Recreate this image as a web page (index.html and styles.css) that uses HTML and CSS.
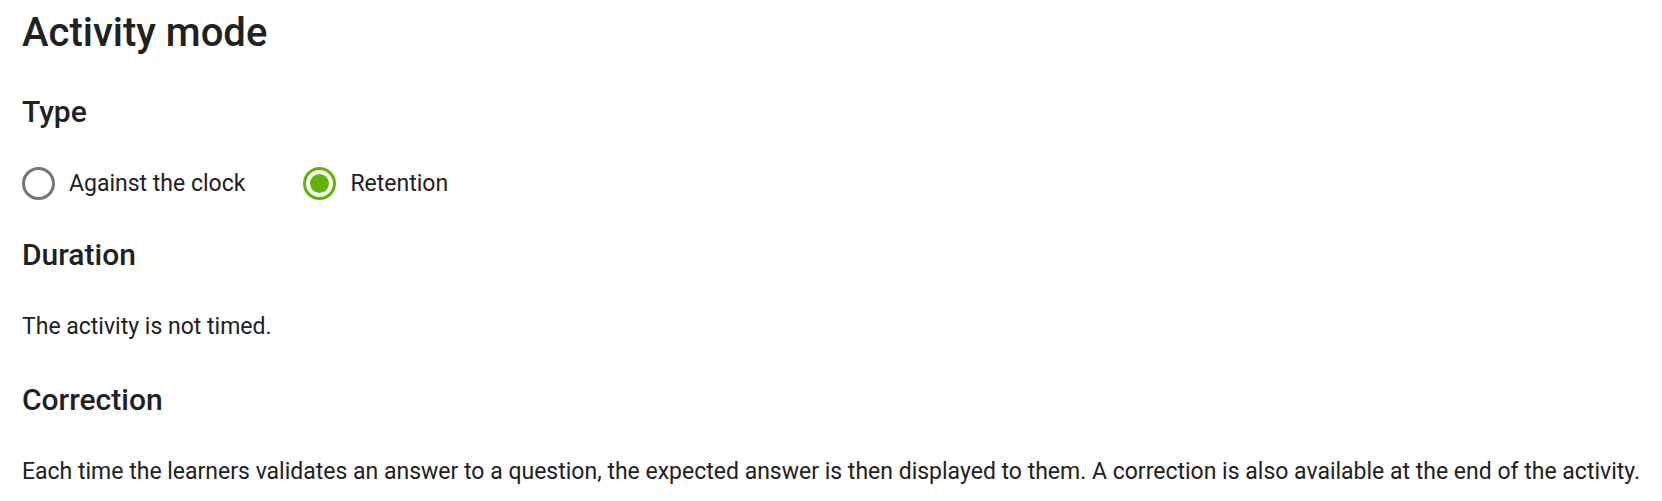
FILE: index.html
```html
<!DOCTYPE html>
<html lang="en">
<head>
<meta charset="utf-8">
<link rel="stylesheet" href="styles.css">
<title>Activity mode</title>
</head>
<body>
<main class="page">
  <h1 class="title">Activity mode</h1>
  <section class="section">
    <h2 class="heading">Type</h2>
    <div class="radios">
      <label class="radio"><span class="radio-circle"></span><span class="radio-label">Against the clock</span></label>
      <label class="radio"><span class="radio-circle checked"></span><span class="radio-label">Retention</span></label>
    </div>
  </section>
  <section class="section">
    <h2 class="heading">Duration</h2>
    <p class="text">The activity is not timed.</p>
  </section>
  <section class="section section--after-text">
    <h2 class="heading">Correction</h2>
    <p class="text">Each time the learners validates an answer to a question, the expected answer is then displayed to them. A correction is also available at the end of the activity.</p>
  </section>
</main>
</body>
</html>
```
FILE: styles.css
```css
html, body {
  margin: 0;
  padding: 0;
  background: #ffffff;
}
body {
  font-family: Roboto, "Liberation Sans", sans-serif;
  color: #212121;
}
.page {
  padding: 9px 22px 0 22px;
}
.title {
  margin: 0;
  font-size: 40px;
  font-weight: 500;
  line-height: 48px;
}
.section {
  margin-top: 37px;
}
.section--after-text {
  margin-top: 39px;
}
.heading {
  margin: 0;
  font-size: 30px;
  font-weight: 500;
  line-height: 36px;
}
.text {
  margin: 38px 0 0 0;
  font-size: 23px;
  line-height: 32px;
  white-space: nowrap;
}
.radios {
  display: flex;
  gap: 58px;
  margin-top: 37px;
}
.radio {
  display: flex;
  align-items: center;
  gap: 14px;
  font-size: 23px;
  line-height: 32px;
}
.radio-circle {
  box-sizing: border-box;
  width: 33px;
  height: 33px;
  border: 3px solid #757575;
  border-radius: 50%;
  display: flex;
  align-items: center;
  justify-content: center;
}
.radio-circle.checked {
  border-color: #62b300;
}
.radio-circle.checked::after {
  content: "";
  width: 19px;
  height: 19px;
  border-radius: 50%;
  background: #62b300;
}
```
